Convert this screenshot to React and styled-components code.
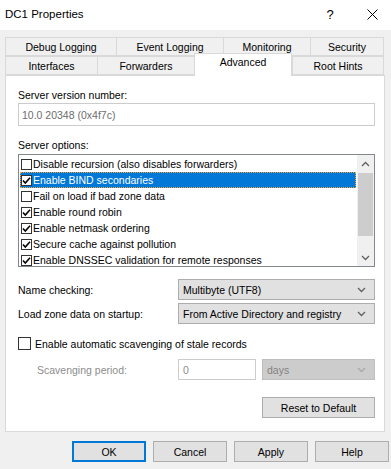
import React from "react";
import styled, { createGlobalStyle } from "styled-components";

const GlobalStyle = createGlobalStyle`
  body {
    margin: 0;
    background: #f0f0f0;
    font-family: "Liberation Sans", Arial, sans-serif;
    font-size: 10.5px;
    color: #000;
  }
`;

const Window = styled.div`
  width: 391px;
  height: 469px;
  background: #f0f0f0;
  display: flex;
  flex-direction: column;
  overflow: hidden;
`;

const TitleBar = styled.div`
  height: 30px;
  background: #fff;
  display: flex;
  align-items: center;
  padding-left: 5px;
  font-size: 11.5px;
  flex-shrink: 0;
`;

const Title = styled.div`
  flex: 1;
  margin-top: -2px;
`;

const TitleButton = styled.div`
  width: ${(p) => p.$w}px;
  display: flex;
  justify-content: center;
  align-items: center;
  font-size: 13px;
  margin-top: -2px;
`;

const Tabs = styled.div`
  margin: 7px 7px 0 5px;
  display: flex;
  flex-direction: column;
`;

const TabRow = styled.div`
  display: grid;
  grid-template-columns: ${(p) => p.$cols};
  height: 19px;
  align-items: end;
`;

const Tab = styled.div`
  height: ${(p) => (p.$active ? 23 : 19)}px;
  margin-top: ${(p) => (p.$active ? -4 : 0)}px;
  margin-bottom: ${(p) => (p.$active ? -1 : 0)}px;
  box-sizing: border-box;
  border: 1px solid #d9d9d9;
  border-right: ${(p) => (p.$last || p.$active ? "1px solid #d9d9d9" : "none")};
  border-bottom: ${(p) => (p.$active ? "none" : "1px solid #d9d9d9")};
  background: ${(p) => (p.$active ? "#fff" : "#f0f0f0")};
  display: flex;
  justify-content: center;
  align-items: ${(p) => (p.$active ? "flex-start" : "center")};
  padding-top: ${(p) => (p.$active ? 2 : 0)}px;
  position: relative;
  z-index: ${(p) => (p.$active ? 2 : 1)};
  white-space: nowrap;
`;

const Panel = styled.div`
  margin: 0 6px 0 5px;
  height: 357px;
  box-sizing: border-box;
  background: #fff;
  border: 1px solid #d9d9d9;
  padding: 13px 9px 0 12px;
  display: flex;
  flex-direction: column;
  position: relative;
  z-index: 1;
`;

const Label = styled.div`
  height: 13px;
  line-height: 13px;
  color: ${(p) => (p.$disabled ? "#8d8d8d" : "#000")};
  margin-top: ${(p) => p.$mt || 0}px;
  white-space: nowrap;
`;

const TextBox = styled.div`
  height: 23px;
  box-sizing: border-box;
  border: 1px solid #cccccc;
  background: #fff;
  color: #6d6d6d;
  display: flex;
  align-items: center;
  padding-left: 3px;
  margin-top: ${(p) => p.$mt || 0}px;
`;

const ListBox = styled.div`
  margin-top: 2px;
  height: 113px;
  box-sizing: border-box;
  border: 1px solid #828790;
  display: flex;
  overflow: hidden;
`;

const Items = styled.div`
  flex: 1;
  padding: 1px 1px 0 1px;
  overflow: hidden;
`;

const Item = styled.div`
  height: 16px;
  box-sizing: border-box;
  display: flex;
  align-items: center;
  gap: 1px;
  padding-left: 1px;
  background: ${(p) => (p.$selected ? "#0078d7" : "transparent")};
  color: ${(p) => (p.$selected ? "#fff" : "#000")};
  outline: ${(p) => (p.$selected ? "1px dotted #f3a23c" : "none")};
  outline-offset: -1px;
  white-space: nowrap;
`;

const SmallCheck = styled.div`
  width: 11px;
  height: 11px;
  box-sizing: border-box;
  border: 1px solid #333;
  background: #fff;
  display: flex;
  align-items: center;
  justify-content: center;
  flex-shrink: 0;
`;

const ScrollBar = styled.div`
  width: 17px;
  background: #f0f0f0;
  display: flex;
  flex-direction: column;
`;

const ScrollArrow = styled.div`
  height: 17px;
  display: flex;
  align-items: center;
  justify-content: center;
`;

const ScrollTrack = styled.div`
  flex: 1;
  padding-top: 1px;
`;

const Thumb = styled.div`
  height: 63px;
  margin: 0 1px;
  background: #cdcdcd;
`;

const FieldRow = styled.div`
  display: flex;
  align-items: center;
  margin-top: ${(p) => p.$mt || 0}px;
  height: 21px;
`;

const FieldLabel = styled.div`
  width: ${(p) => p.$w}px;
  padding-left: ${(p) => p.$indent || 0}px;
  box-sizing: border-box;
  flex-shrink: 0;
  color: ${(p) => (p.$disabled ? "#8d8d8d" : "#000")};
  white-space: nowrap;
`;

const Select = styled.div`
  flex: 1;
  height: 21px;
  box-sizing: border-box;
  border: 1px solid ${(p) => (p.$disabled ? "#bfbfbf" : "#adadad")};
  background: ${(p) => (p.$disabled ? "#cccccc" : "#e1e1e1")};
  color: ${(p) => (p.$disabled ? "#838383" : "#000")};
  display: flex;
  align-items: center;
  padding: 0 8px 0 4px;
  margin-left: ${(p) => p.$ml || 0}px;
`;

const SelectText = styled.div`
  flex: 1;
  white-space: nowrap;
`;

const CheckRow = styled.div`
  display: flex;
  align-items: center;
  gap: 4px;
  margin-top: 13px;
  height: 13px;
`;

const BigCheck = styled.div`
  width: 13px;
  height: 13px;
  box-sizing: border-box;
  border: 1px solid #333;
  background: #fff;
`;

const ScavInput = styled.div`
  width: 78px;
  height: 21px;
  box-sizing: border-box;
  border: 1px solid #cccccc;
  background: #fff;
  color: #8d8d8d;
  display: flex;
  align-items: center;
  padding-left: 4px;
`;

const ResetRow = styled.div`
  display: flex;
  justify-content: flex-end;
  margin-top: 17px;
`;

const Button = styled.div`
  width: ${(p) => p.$w || 74}px;
  height: 21px;
  box-sizing: border-box;
  border: ${(p) => (p.$default ? "2px solid #0078d7" : "1px solid #adadad")};
  background: #e1e1e1;
  display: flex;
  align-items: center;
  justify-content: center;
  white-space: nowrap;
`;

const Footer = styled.div`
  display: flex;
  justify-content: flex-end;
  gap: 7px;
  padding-right: 2px;
  margin-top: 9px;
`;

const Tick = () => (
  <svg width="9" height="9" viewBox="0 0 9 9">
    <path d="M1 4.5 L3.3 7 L8 1.8" fill="none" stroke="#000" strokeWidth="1.6" />
  </svg>
);

const Chevron = ({ up, color = "#606060" }) => (
  <svg width="9" height="6" viewBox="0 0 9 6">
    <path
      d={up ? "M1 5 L4.5 1.5 L8 5" : "M1 1 L4.5 4.5 L8 1"}
      fill="none"
      stroke={color}
      strokeWidth="1.3"
    />
  </svg>
);

const options = [
  ["Disable recursion (also disables forwarders)", false],
  ["Enable BIND secondaries", true, true],
  ["Fail on load if bad zone data", false],
  ["Enable round robin", true],
  ["Enable netmask ordering", true],
  ["Secure cache against pollution", true],
  ["Enable DNSSEC validation for remote responses", true],
];

export default function App() {
  return (
    <Window>
      <GlobalStyle />
      <TitleBar>
        <Title>DC1 Properties</Title>
        <TitleButton $w={46}>?</TitleButton>
        <TitleButton $w={38}>
          <svg width="11" height="11" viewBox="0 0 11 11">
            <path d="M0.5 0.5 L10.5 10.5 M10.5 0.5 L0.5 10.5" stroke="#000" strokeWidth="1" />
          </svg>
        </TitleButton>
      </TitleBar>

      <Tabs>
        <TabRow $cols="111px 107px 87px 74px">
          <Tab>Debug Logging</Tab>
          <Tab>Event Logging</Tab>
          <Tab>Monitoring</Tab>
          <Tab $last>Security</Tab>
        </TabRow>
        <TabRow $cols="92px 97px 98px 92px">
          <Tab>Interfaces</Tab>
          <Tab>Forwarders</Tab>
          <Tab $active>Advanced</Tab>
          <Tab $last>Root Hints</Tab>
        </TabRow>
      </Tabs>

      <Panel>
        <Label>Server version number:</Label>
        <TextBox $mt={1}>10.0 20348 (0x4f7c)</TextBox>

        <Label $mt={13}>Server options:</Label>
        <ListBox>
          <Items>
            {options.map(([text, checked, selected]) => (
              <Item key={text} $selected={selected}>
                <SmallCheck>{checked && <Tick />}</SmallCheck>
                {text}
              </Item>
            ))}
          </Items>
          <ScrollBar>
            <ScrollArrow>
              <Chevron up />
            </ScrollArrow>
            <ScrollTrack>
              <Thumb />
            </ScrollTrack>
            <ScrollArrow>
              <Chevron />
            </ScrollArrow>
          </ScrollBar>
        </ListBox>

        <FieldRow $mt={12}>
          <FieldLabel $w={160}>Name checking:</FieldLabel>
          <Select>
            <SelectText>Multibyte (UTF8)</SelectText>
            <Chevron />
          </Select>
        </FieldRow>
        <FieldRow $mt={3}>
          <FieldLabel $w={160}>Load zone data on startup:</FieldLabel>
          <Select>
            <SelectText>From Active Directory and registry</SelectText>
            <Chevron />
          </Select>
        </FieldRow>

        <CheckRow>
          <BigCheck />
          Enable automatic scavenging of stale records
        </CheckRow>

        <FieldRow $mt={9}>
          <FieldLabel $w={160} $indent={19} $disabled>
            Scavenging period:
          </FieldLabel>
          <ScavInput>0</ScavInput>
          <Select $disabled $ml={6}>
            <SelectText>days</SelectText>
            <Chevron color="#a8a8a8" />
          </Select>
        </FieldRow>

        <ResetRow>
          <Button $w={113}>Reset to Default</Button>
        </ResetRow>
      </Panel>

      <Footer>
        <Button $default>OK</Button>
        <Button>Cancel</Button>
        <Button>Apply</Button>
        <Button>Help</Button>
      </Footer>
    </Window>
  );
}
